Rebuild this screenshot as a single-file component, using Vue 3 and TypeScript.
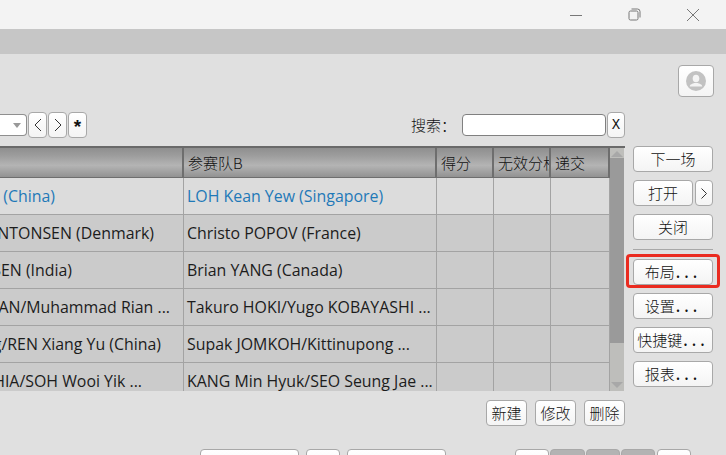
<script setup lang="ts">
interface Row { a: string; b: string; aEnd: number; current?: boolean }
// aEnd: where the left column's text ends, in pixels from the column's left edge
const rows: Row[] = [
  { a: 'SHI Yu Qi (China)', b: 'LOH Kean Yew (Singapore)', aEnd: 55, current: true },
  { a: 'Anders ANTONSEN (Denmark)', b: 'Christo POPOV (France)', aEnd: 154 },
  { a: 'Lakshya SEN (India)', b: 'Brian YANG (Canada)', aEnd: 72 },
  { a: 'Fajar ALFIAN/Muhammad Rian ...', b: 'Takuro HOKI/Yugo KOBAYASHI ...', aEnd: 170 },
  { a: 'LIANG Wei Keng/REN Xiang Yu (China)', b: 'Supak JOMKOH/Kittinupong ...', aEnd: 161 },
  { a: 'Aaron CHIA/SOH Wooi Yik ...', b: 'KANG Min Hyuk/SEO Seung Jae ...', aEnd: 142 },
]
const sideButtons = ['设置', '快捷键', '报表']
</script>

<template>
  <div class="app">
    <header class="titlebar">
      <svg class="win" width="12" height="12" viewBox="0 0 12 12"><path d="M0 6.500h12" /></svg>
      <svg class="win" width="13" height="13" viewBox="0 0 13 13"><rect x="1" y="3" width="9" height="9" rx="1.500" /><path d="M3.500 1h6A2.500 2.500 0 0 1 12 3.500v6" /></svg>
      <svg class="win" width="12" height="12" viewBox="0 0 12 12"><path d="M0 0l12 12M12 0L0 12" /></svg>
    </header>
    <div class="band"></div>
    <main class="main">
      <div class="profile-row">
        <button class="btn profile">
          <svg width="20" height="20" viewBox="0 0 20 20">
            <circle cx="10" cy="10" r="10" fill="#c2c2c2" />
            <ellipse cx="10" cy="7.500" rx="3.300" ry="3.800" fill="#f4f4f4" />
            <path d="M3.800 15.500c0-2.300 3-2.700 4.600-3.500h3.200c1.600.8 4.600 1.200 4.600 3.500z" fill="#f4f4f4" />
          </svg>
        </button>
      </div>
      <div class="toolbar">
        <div class="nav">
          <div class="select"><span class="caret"></span></div>
          <button class="btn tiny">
            <svg width="8" height="14" viewBox="0 0 8 14"><path d="M7 1L1 7l6 6" /></svg>
          </button>
          <button class="btn tiny">
            <svg width="8" height="14" viewBox="0 0 8 14"><path d="M1 1l6 6-6 6" /></svg>
          </button>
          <button class="btn tiny mono star">*</button>
        </div>
        <div class="search">
          <span class="search-label">搜索：</span>
          <input class="search-input" type="text" />
          <button class="btn tiny clear mono">X</button>
        </div>
      </div>
      <div class="content">
        <div class="left">
          <div class="table">
            <div class="grid">
              <div class="cell head"></div>
              <div class="cell head">参赛队B</div>
              <div class="cell head">得分</div>
              <div class="cell head">无效分析</div>
              <div class="cell head">递交</div>
              <template v-for="r in rows" :key="r.b">
                <div class="cell first" :class="{ current: r.current }" :style="{ paddingRight: 183 - r.aEnd + 'px' }">{{ r.a }}</div>
                <div class="cell" :class="{ current: r.current }">{{ r.b }}</div>
                <div class="cell" :class="{ current: r.current }"></div>
                <div class="cell" :class="{ current: r.current }"></div>
                <div class="cell" :class="{ current: r.current }"></div>
              </template>
            </div>
            <div class="scroll">
              <span class="arrow up"></span>
              <div class="thumb"></div>
              <span class="arrow down"></span>
            </div>
          </div>
          <div class="actions">
            <button class="btn action">新建</button>
            <button class="btn action">修改</button>
            <button class="btn action">删除</button>
          </div>
        </div>
        <aside class="side">
          <button class="btn wide">下一场</button>
          <div class="split">
            <button class="btn open">打开</button>
            <button class="btn more">
              <svg width="6" height="11" viewBox="0 0 6 11"><path d="M.5.500l5 5-5 5" /></svg>
            </button>
          </div>
          <button class="btn wide">关闭</button>
          <div class="divider"></div>
          <button class="btn wide highlighted">布局<span class="dots">...</span></button>
          <button v-for="s in sideButtons" :key="s" class="btn wide">{{ s }}<span class="dots">...</span></button>
        </aside>
      </div>
      <div class="bottom">
        <div class="bottom-group">
          <button class="btn b1"></button>
          <button class="btn b2"></button>
          <button class="btn b1"></button>
        </div>
        <div class="pager">
          <button class="btn pg"></button>
          <button class="btn pg off mid"></button>
          <button class="btn pg off"></button>
          <button class="btn pg off"></button>
          <button class="btn pg last"></button>
        </div>
      </div>
    </main>
  </div>
</template>

<style>
html, body { margin: 0; padding: 0; overflow: hidden; }
</style>

<style scoped>
.app {
  width: 726px;
  height: 455px;
  overflow: hidden;
  background: #e0e0e0;
  display: flex;
  flex-direction: column;
  font-family: "Open Sans", "Noto Sans CJK SC", sans-serif;
  color: #1c1c1c;
  font-size: 15.9px;
}
.titlebar {
  height: 29px;
  flex: none;
  background: #f3f3f3;
  display: flex;
  justify-content: flex-end;
  align-items: center;
  gap: 46px;
  padding-right: 27px;
}
.win { fill: none; stroke: #777; stroke-width: 1; }
.band { height: 25px; flex: none; background: #c6c6c6; }
.main { flex: 1; display: flex; flex-direction: column; min-height: 0; }
.btn {
  box-sizing: border-box;
  padding: 0 0 2px;
  border: 1px solid #a8a8a8;
  border-radius: 4px;
  background: linear-gradient(#ffffff, #f4f4f4);
  font-family: "Noto Sans CJK SC", sans-serif;
  font-size: 15px;
  font-weight: 300;
  color: #111;
  display: flex;
  align-items: center;
  justify-content: center;
}
.dots { letter-spacing: 4px; margin-left: 1px; font-weight: 500; }
.btn svg path { fill: none; stroke: #333; stroke-width: 1; }
.profile-row { display: flex; justify-content: flex-end; padding: 11px 12px 0 0; }
.profile { width: 36px; height: 32px; padding: 0; }
.btn.profile svg path { fill: #f4f4f4; stroke: none; }
.toolbar {
  margin-top: 15px;
  width: 625px;
  height: 26px;
  display: flex;
  justify-content: space-between;
  align-items: center;
}
.nav { display: flex; align-items: center; gap: 1px; }
.select {
  width: 27px;
  height: 22px;
  box-sizing: border-box;
  background: #fff;
  border: 1px solid #8f8f8f;
  border-left: none;
  border-radius: 0 4px 4px 0;
  display: flex;
  align-items: center;
  justify-content: flex-end;
  padding-right: 5px;
}
.caret {
  width: 0;
  height: 0;
  border-left: 4px solid transparent;
  border-right: 4px solid transparent;
  border-top: 5px solid #999;
}
.tiny { width: 19px; height: 26px; padding: 0; }
.clear { width: 18px; }
.mono { font-family: "Liberation Mono", monospace; font-size: 14px; font-weight: 400; color: #111; }
.star { font-size: 19px; font-weight: 700; padding-top: 6px; }
.search { display: flex; align-items: center; gap: 1px; }
.search-label { font-family: "Noto Sans CJK SC", sans-serif; font-size: 15px; font-weight: 300; margin: 0 5px 2px 0; color: #111; }
.search-input {
  width: 144px;
  height: 22px;
  box-sizing: border-box;
  border: 1px solid #808080;
  border-radius: 4px;
  background: #fff;
  outline: none;
}
.content { margin-top: 8px; display: flex; gap: 8px; align-items: flex-start; }
.left { width: 625px; flex: none; }
.table {
  height: 245px;
  display: flex;
  overflow: hidden;
  border-top: 2px solid #6a6a6a;
  box-sizing: border-box;
  background: #e0e0e0;
}
.grid {
  flex: none;
  width: 610px;
  display: grid;
  grid-template-columns: 184px 253px 57px 57px 59px;
  grid-template-rows: 30px;
  grid-auto-rows: 37px;
  overflow: hidden;
  align-content: start;
}
.cell {
  box-sizing: border-box;
  border-right: 1px solid #a3a3a3;
  border-bottom: 1px solid #a3a3a3;
  background: #cbcbcb;
  padding-left: 3px;
  display: flex;
  align-items: center;
  white-space: nowrap;
  overflow: hidden;
}
.first { justify-content: flex-end; padding-left: 0; }
.cell.current { background: #dcdcdc; color: #1f79b8; }
.head {
  height: 30px;
  background: linear-gradient(#8f8f8f, #9c9c9c 25%, #b4b4b4 60%, #929292);
  border-right: 2px solid #6e6e6e;
  border-bottom: 1px solid #6e6e6e;
  font-family: "Noto Sans CJK SC", sans-serif;
  font-size: 15px;
  font-weight: 300;
  padding-left: 4px;
  color: #111;
}
.scroll {
  flex: none;
  width: 14px;
  height: 100%;
  background: #bebebb;
  display: flex;
  flex-direction: column;
  align-items: center;
}
.thumb { width: 100%; height: 185px; background: #9a9a9a; }
.arrow { width: 0; height: 0; border-left: 6px solid transparent; border-right: 6px solid transparent; }
.arrow.up { border-bottom: 6px solid #a8a8a8; margin: 3px 0 1px; }
.arrow.down { border-top: 6px solid #a8a8a8; margin-top: auto; margin-bottom: 3px; }
.actions { display: flex; justify-content: flex-end; gap: 8px; margin-top: 9px; }
.action { width: 41px; height: 26px; }
.side { width: 80px; flex: none; display: flex; flex-direction: column; gap: 8px; }
.wide { width: 80px; height: 26px; }
.split { display: flex; gap: 2px; }
.open { width: 60px; height: 26px; }
.more { width: 18px; height: 26px; padding: 0; }
.divider { height: 1px; background: #a8a8a8; margin: 1px 0; }
.highlighted { position: relative; }
.highlighted::after {
  content: "";
  position: absolute;
  top: -6px;
  bottom: -4px;
  left: -8px;
  right: -8px;
  border: 3px solid #ea2b20;
  border-radius: 4px;
}
.bottom {
  margin-top: 23px;
  display: flex;
  padding-left: 200px;
  width: 491px;
  justify-content: space-between;
}
.bottom-group { display: flex; gap: 7px; }
.b1 { width: 99px; height: 26px; }
.b2 { width: 34px; height: 26px; }
.pager { display: flex; gap: 1px; }
.pg { width: 34px; height: 26px; }
.pg.mid { width: 35px; }
.pg.off { background: #b3b3b3; }
.pg.last { margin-left: 1px; }
</style>
